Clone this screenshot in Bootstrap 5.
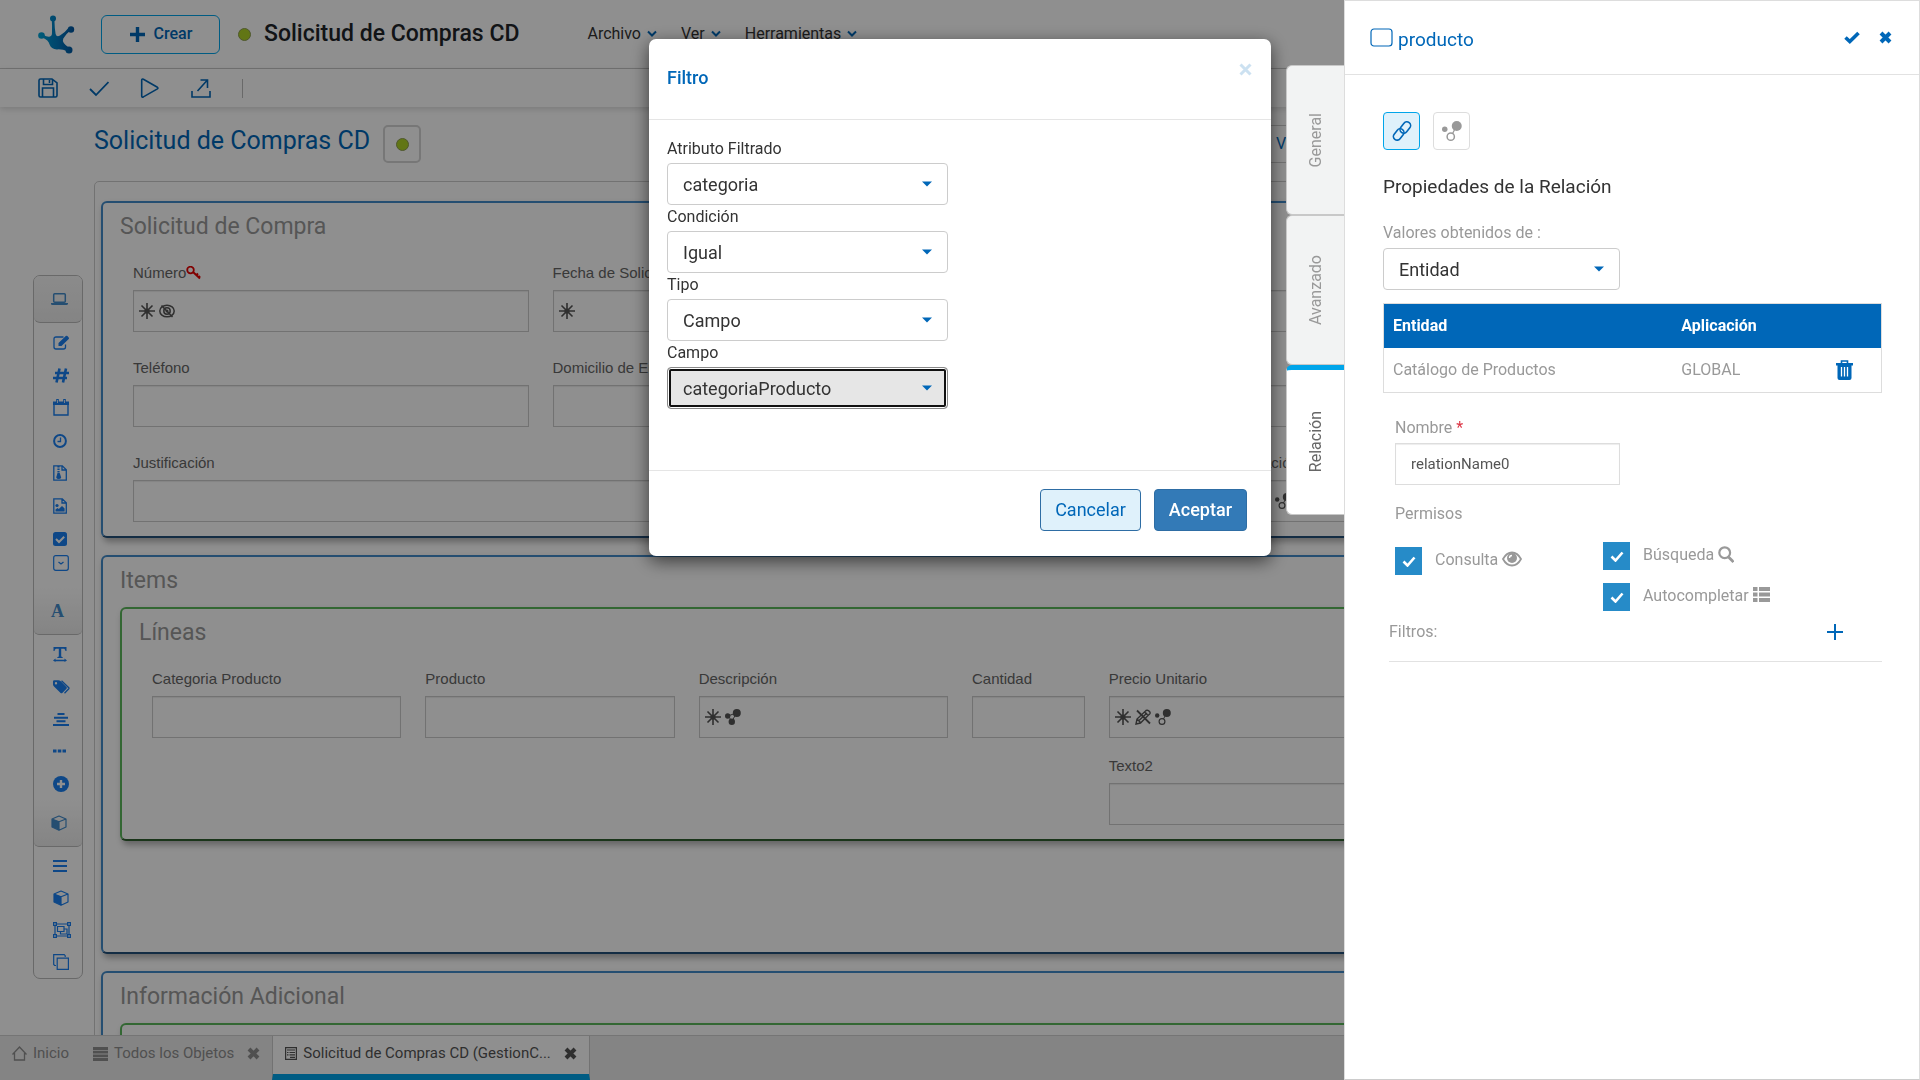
<!DOCTYPE html>
<html lang="es">
<head>
<meta charset="utf-8">
<meta name="viewport" content="width=device-width, initial-scale=1">
<title>Solicitud de Compras CD</title>
<link href="https://cdn.jsdelivr.net/npm/bootstrap@5.3.0/dist/css/bootstrap.min.css" rel="stylesheet">
<style>
  :root { --brand: #0067b8; --sky: #00a5ea; --pal: #197ff0; --steel: #428bca; }
  body { font-family: Roboto, sans-serif; font-size: 16px; color: #333; background: #fff; }
  a { text-decoration: none; }
  svg { display: block; flex: none; }
  .ic { fill: none; stroke: currentColor; stroke-width: 1.6; }
  .text-brand { color: var(--brand); }

  /* top bar */
  .topbar { height: 69px; border-bottom: 1px solid #ccc; padding: 0 38px; }
  .btn-create { width: 119px; height: 39px; margin: 0 18px 0 26px; gap: 8px; border: 1px solid var(--sky); border-radius: 6px; color: var(--brand); font-weight: 500; font-size: 16px; }
  .status-dot { width: 13px; height: 13px; border-radius: 50%; background: #afd327; border: 1px solid #8c9c50; }
  .app-title { font-size: 23px; font-weight: 500; line-height: 32px; color: #212529; margin: 0 68px 0 13px; }
  .topmenu a { color: #333; line-height: 24px; display: flex; align-items: center; gap: 6px; }
  .toolbar-strip { height: 38px; gap: 31px; padding-left: 38px; box-shadow: 0 2px 6px rgba(0,0,0,.15); color: var(--brand); }
  .toolbar-strip .divider { width: 1px; height: 19px; background: #bbb; }

  /* workspace */
  .palette { width: 50px; margin: 168px 11px 0 33px; border: 1px solid #bbb; border-radius: 7px; }
  .pal-head { height: 47px; border: 0; border-bottom: 1px solid #bbb; border-radius: 0 0 5px 5px; color: var(--steel); background: linear-gradient(#fff, #ececec); padding: 0 0 0 17px; display: flex; align-items: center; }
  .pal-head.first { background: linear-gradient(#f8f8f8, #ececec); border-radius: 6px; }
  .pal-list { display: flex; flex-direction: column; color: var(--pal); padding: 3px 0 0 19px; }
  .pal-list button { flex: 1 1 0; border: 0; background: none; padding: 0; color: inherit; display: flex; align-items: center; }
  .pal-list button.tight { flex: 0 0 14px; }
  .pal-a { height: 265px; padding-bottom: 17px; }
  .pal-b { height: 165px; }
  .pal-c { height: 131px; }
  .letter { font: bold 18px/18px "Liberation Serif", serif; }

  .work-main { margin-right: 94px; }
  .doc-head { margin-top: 18px; height: 56px; }
  .doc-title { font-size: 25px; line-height: 32px; color: var(--brand); font-weight: 400; }
  .dot-box { width: 38px; height: 38px; margin-left: 13px; border: 2px solid #d4d4d4; border-radius: 5px; background: none; }
  .view-box { width: 566px; height: 38px; border: 1px solid #ccc; border-radius: 4px; padding: 0 15px; }
  .frame { border: 1px solid #ccc; border-radius: 5px; padding: 19px 6px 0; }
  .zone { border: 2px solid var(--steel); border-bottom-color: #24507a; border-radius: 6px; padding: 6px 17px 14px; margin-bottom: 17px; box-shadow: 2px 4px 6px rgba(0,0,0,.3); background: #fff; }
  .zone.grid-zone { border-color: #5cb85c; border-bottom-color: #2f5f2f; margin-bottom: 0; }
  .zone.tall { padding-bottom: 111px; }
  .zone h2 { font-size: 23px; font-weight: 400; line-height: 36px; color: #999; margin: 0 0 8px; }
  .fields { padding: 8px 13px 0; }
  .fld label { display: flex; align-items: center; font-family: "Liberation Sans", sans-serif; font-size: 15px; line-height: 24px; color: #666; margin-bottom: 5px; }
  .inp { position: relative; height: 42px; }
  .inp .form-control { height: 42px; border: 1px solid #ccc; border-radius: 0; box-shadow: inset 0 1px 1px rgba(0,0,0,.075); background: none; }
  .inp .marks { position: absolute; left: 6px; top: 13px; display: flex; gap: 4px; color: #555; }
  .gap-rows { row-gap: 24px; }
  .gap-rows-s { row-gap: 16px; }
  .wide-a { flex: 48 1 0; } .wide-b { flex: 25 1 0; }

  /* bottom tabs */
  .task-tabs { height: 45px; background: #ebebeb; border-top: 1px solid #d0d0d0; font-size: 15px; }
  .task { display: flex; align-items: center; gap: 6px; color: #8f8f8f; border-bottom: 6px solid transparent; padding: 0 12px 3px; }
  .task.on { background: #fff; color: #555; border-bottom-color: var(--sky); border-left: 1px solid #ccc; border-right: 1px solid #ccc; }
  .task button { border: 0; background: none; padding: 0; margin-left: 7px; color: inherit; }

  /* dialog */
  .modal-backdrop.dim { background: #000; opacity: .44; width: 100%; height: 100%; }
  .modal-dialog.filter { max-width: 622px; margin: 39px auto; }
  .filter .modal-content { border: 0; border-radius: 7px; box-shadow: 0 5px 18px rgba(0,0,0,.6); }
  .filter .modal-header { height: 81px; border-color: #e5e5e5; padding: 0 19px 4px 18px; }
  .filter .modal-title { font-size: 18px; font-weight: 500; color: var(--brand); }
  .filter .close-x { border: 0; background: none; padding: 0; color: #cce1f1; }
  .filter .modal-body { padding: 17px 18px 61px; }
  .filter .modal-footer { border-color: #e5e5e5; height: 86px; padding: 0 24px 7px; gap: 13px; }
  .filter .modal-footer > * { margin: 0; }
  .filter .modal-footer .btn { height: 42px; font-size: 18px; line-height: 24px; padding: 0 14px; border-radius: 4px; }
  .btn-cancel { background: #dff1fb; border: 1px solid #2e6da4; color: var(--brand); }
  .btn-accept { background: #337ab7; border: 1px solid #2e6da4; color: #fff; font-weight: 500; }
  .combo { height: 42px; border: 1px solid #ccc; border-radius: 4px; font-size: 18px; color: #333; padding: 0 40px 0 15px; background: #fff url("data:image/svg+xml,%3Csvg xmlns='http://www.w3.org/2000/svg' viewBox='0 0 10 6'%3E%3Cpath d='M0 .5h10L5 5.500z' fill='%230067b8'/%3E%3C/svg%3E") no-repeat right 15px center / 10px 6px; }
  .combo.picked { background-color: #e6e6e6; border-color: #888; box-shadow: inset 0 0 0 1px #fff, inset 0 0 0 3px #111; }
  .combo-label { display: block; line-height: 24px; margin-bottom: 2px; }
  .filter .combo { width: 281px; }

  /* property panel */
  .side { position: fixed; top: 0; right: 0; bottom: 0; z-index: 1060; display: flex; }
  .side-tabs { padding-top: 65px; width: 58px; }
  .side-tab { width: 58px; height: 150px; border: 1px solid #c8c8c8; border-right: 0; border-radius: 6px 0 0 6px; background: #f2f3f3; color: #999; display: flex; align-items: center; justify-content: center; padding: 0; }
  .side-tab span { writing-mode: vertical-rl; transform: rotate(180deg); }
  .side-tab.on { background: #fff; color: #666; border-top: 5px solid var(--sky); }
  .side-card { width: 576px; background: #fff; border: 1px solid #ddd; border-bottom-color: #ccc; }
  .side-head { height: 74px; border-bottom: 1px solid #e2e2e2; padding: 0 27px 0 25px; }
  .side-head .obj { font-size: 19px; line-height: 24px; padding-top: 4px; }
  .side-body { padding: 37px 37px 0 38px; }
  .sq { width: 37px; height: 38px; border: 1px solid #ddd; border-radius: 4px; background: #fff; color: #999; padding: 0; display: flex; align-items: center; justify-content: center; }
  .sq.on { border-color: var(--sky); background: #dff1fb; color: var(--brand); }
  .side-body h3 { font-size: 19px; font-weight: 400; line-height: 30px; margin: 22px 0 18px; color: #333; }
  .muted { color: #999; line-height: 26px; }
  .lbl { display: block; margin-bottom: 2px; }
  .side-body .combo { width: 237px; }
  .ent { margin: 13px 0 0; border: 1px solid #ddd; }
  .ent th { background: var(--brand); color: #fff; font-weight: 700; height: 44px; }
  .ent td { color: #999; height: 45px; }
  .ent th, .ent td { padding: 0 9px; vertical-align: middle; box-shadow: none; border: 0; }
  .ent button, .adder { border: 0; background: none; padding: 0; color: var(--brand); }
  .ent button { margin-left: 10px; }
  .rel { padding: 22px 0 0 12px; }
  .name-in { width: 225px; height: 42px; border: 1px solid #ddd; border-radius: 0; font-size: 15px; color: #555; padding: 0 15px; box-shadow: inset 0 1px 1px rgba(0,0,0,.075); }
  .perm { display: flex; height: 28px; margin-bottom: 13px; }
  .perm:last-child { margin-bottom: 8px; }
  .perm label { display: flex; gap: 4px; line-height: 26px; color: #999; }
  .perm .form-check-input { width: 27px; height: 28px; margin: 0 13px 0 0; border: 0; border-radius: 0; flex: none; }
  .perm .form-check-input:checked { background: #268bc8 url("data:image/svg+xml,%3Csvg xmlns='http://www.w3.org/2000/svg' viewBox='0 0 14 11'%3E%3Cpath d='M1.500 5.500l4 4L12.500 1.500' fill='none' stroke='%23fff' stroke-width='2.600'/%3E%3C/svg%3E") no-repeat center / 14px 11px; }
  .perm-l { width: 208px; padding-top: 20px; } .perm-r { padding-top: 15px; }
  .filters { margin-left: 6px; border-bottom: 1px solid #e2e2e2; padding: 0 39px 16px 0; }
</style>
</head>
<body class="overflow-hidden">

<svg width="0" height="0" class="position-absolute" aria-hidden="true">
  <defs>
    <linearGradient id="lg" x1="0" y1="0" x2="37" y2="0" gradientUnits="userSpaceOnUse"><stop offset="0" stop-color="#00a5d8"/><stop offset=".55" stop-color="#0079c0"/><stop offset="1" stop-color="#00529c"/></linearGradient>
    <symbol id="star" viewBox="0 0 16 16"><g stroke="currentColor" stroke-width="1.600" fill="none"><path d="M8 0v16M0 8h16M2.500 2.500l11 11M13.500 2.500l-11 11"/></g><circle cx="8" cy="8" r="2.600" fill="currentColor"/></symbol>
    <symbol id="noeye" viewBox="0 0 16 16"><g fill="none" stroke="currentColor" stroke-width="1.500"><ellipse cx="8" cy="8" rx="7.200" ry="5.800"/><circle cx="8" cy="8" r="3.200"/><path d="M2.500 2.500l11 11.500"/></g><circle cx="8" cy="8" r="1.500" fill="currentColor"/></symbol>
    <symbol id="mol" viewBox="0 0 16 16"><circle cx="11.800" cy="4" r="4" fill="currentColor"/><circle cx="2.200" cy="6.500" r="2.200" fill="currentColor"/><circle cx="7" cy="12.500" r="2.900" fill="none" stroke="currentColor" stroke-width="1.200"/><path d="M8.500 10l1.500-3" stroke="currentColor"/></symbol>
    <symbol id="molf" viewBox="0 0 16 16"><circle cx="11.800" cy="4" r="4" fill="currentColor"/><circle cx="2.700" cy="7" r="2.700" fill="currentColor"/><circle cx="6.800" cy="12.700" r="3.200" fill="currentColor"/><path d="M3 7l8-3M7 12l4-7M3 7l4 5" stroke="currentColor"/></symbol>
    <symbol id="nopen" viewBox="0 0 16 16"><g fill="none" stroke="currentColor" stroke-width="1.400"><path d="M1 15l1-5L11 1.500q2-1 3.500 1t-.5 3L5.500 14zM9.500 3l3.500 3.500M2 10l3.500 3.500M4 11.500l8-7.500"/><path d="M2 1.500l13 13" stroke-width="1.800"/></g></symbol>
    <symbol id="cube" viewBox="0 0 16 16"><path d="M1 4l7 2.500V15L1 12z" fill="currentColor"/><path d="M1 4l7-3 7 3v8l-7 3.300L1 12zM1 4l7 2.700L15 4M8 6.700V15" fill="none" stroke="currentColor" stroke-width="1.200" stroke-linejoin="round"/></symbol>
    <symbol id="cross" viewBox="0 0 13 13"><path d="M2 2l9 9M11 2l-9 9" stroke="currentColor" stroke-width="4"/></symbol>
    <symbol id="chev" viewBox="0 0 10 8"><path d="M1 1.500l4 4 4-4" fill="none" stroke="currentColor" stroke-width="2"/></symbol>
  </defs>
</svg>

<div class="d-flex flex-column vh-100">
  <header class="topbar d-flex align-items-center flex-shrink-0">
    <svg width="37" height="39" viewBox="0 0 37 39" fill="url(#lg)"><circle cx="15" cy="3.500" r="3"/><circle cx="3.500" cy="20.500" r="3.300"/><circle cx="33" cy="14.500" r="3.200"/><circle cx="31" cy="35" r="3.500"/><path d="M13.800 5h2.600q.2 8 1.200 14 1 3.500 4.400 1.500 5-3 8.400-7.500l2.200 2.300q-5 4-7.300 8.300-2 4.200 5.700 9.200l-1.600 3.400q-5-2.200-10.400-1.800-6-.6-7.400-5-1-4-7.200-6.800l.8-2.700q3.500 2 6 1.800 3-.4 2.800-4.200.2-6-.2-12.500z"/></svg>
    <button class="btn btn-create d-flex align-items-center justify-content-center p-0" type="button"><svg width="17" height="17" viewBox="0 0 17 17"><path d="M8.500 1v15M1 8.500h15" stroke="currentColor" stroke-width="3.400"/></svg>Crear</button>
    <span class="status-dot"></span>
    <h1 class="app-title">Solicitud de Compras CD</h1>
    <nav class="topmenu d-flex gap-4">
      <a href="#">Archivo <svg width="10" height="8" class="text-brand"><use href="#chev"/></svg></a>
      <a href="#">Ver <svg width="10" height="8" class="text-brand"><use href="#chev"/></svg></a>
      <a href="#">Herramientas <svg width="10" height="8" class="text-brand"><use href="#chev"/></svg></a>
    </nav>
  </header>

  <div class="toolbar-strip d-flex align-items-center flex-shrink-0">
    <svg class="ic" width="20" height="20" viewBox="0 0 20 20"><path d="M2.500 1H14l5 4v12.500q0 1.500-1.500 1.500h-15Q1 19 1 17.500v-15Q1 1 2.500 1zM5.500 1v5.500h9V1M11.500 2v3M4.500 19v-9h11v9"/></svg>
    <svg class="ic" width="20" height="20" viewBox="0 0 20 20"><path d="M1 11l6 6L19.500 4" stroke-width="1.800"/></svg>
    <svg class="ic" width="20" height="20" viewBox="0 0 20 20"><path d="M1.700 2.300q0-1.800 1.700-1l14 8q1.200.8 0 1.600l-14 8q-1.700.7-1.700-1z"/></svg>
    <svg class="ic" width="20" height="20" viewBox="0 0 20 20"><path d="M1 13v6h18v-6M6.500 13L16 2.500M9.500 2H16.500v8"/></svg>
    <span class="divider"></span>
  </div>

  <div class="d-flex align-items-start flex-fill overflow-hidden">
    <aside class="palette flex-shrink-0">
      <button type="button" class="pal-head first w-100" aria-label="Formulario"><svg width="17" height="12" viewBox="0 0 17 12"><rect x="2.700" y=".8" width="11.600" height="8.400" rx="1" fill="none" stroke="currentColor" stroke-width="1.500"/><path d="M0 10h17v1q-.5 1-1.500 1h-14Q0 12 0 11z" fill="currentColor"/></svg></button>
      <div class="pal-list pal-a">
        <button type="button" aria-label="Texto"><svg width="17" height="15" viewBox="0 0 17 15"><path d="M10.500 2H3Q1 2 1 4v8q0 2 2 2h7.500q2 0 2-2v-2.500" fill="none" stroke="currentColor" stroke-width="1.300"/><path d="M5.500 11V8l7.300-7q.8-.6 1.600.1l1.300 1.300q.7.900 0 1.600L8.500 11zM6.500 8.500L8 10" fill="currentColor"/></svg></button>
        <button type="button" aria-label="Número"><svg class="ic" width="16" height="15" viewBox="0 0 16 15"><path d="M6.500.5l-3 14M13 .5l-3 14M2 5h14M0 10h14" stroke-width="2.600"/></svg></button>
        <button type="button" aria-label="Fecha"><svg width="16" height="17" viewBox="0 0 16 17"><path d="M1 4h14v12H1z" fill="none" stroke="currentColor" stroke-width="1.400"/><path d="M0 2.500h16V6H0z" fill="currentColor"/><path d="M4.500 0v4M11.500 0v4" stroke="currentColor" stroke-width="2.600"/><path d="M4.500 1v3M11.500 1v3" stroke="#fff" stroke-width=".8"/></svg></button>
        <button type="button" aria-label="Hora"><svg class="ic" width="14" height="14" viewBox="0 0 14 14"><circle cx="7" cy="7" r="5.900" stroke-width="2"/><path d="M7.500 3.500v4H4.500" stroke-width="1.300"/></svg></button>
        <button type="button" aria-label="Archivo"><svg class="ic" width="14" height="16" viewBox="0 0 14 16"><path d="M.8.800h8.500l4 4v10.400H.8zM9 1v4h4.200" stroke-width="1.300"/><path d="M5.500 1v7" stroke-dasharray="1.500 1" stroke-width="2.200"/><path d="M4.500 8h2.200l1.500 4.500q-.5 1.500-2.500 1.500T3.200 12.500z" fill="currentColor" stroke="none"/></svg></button>
        <button type="button" aria-label="Imagen"><svg class="ic" width="14" height="16" viewBox="0 0 14 16"><path d="M.8.800h8.500l4 4v10.400H.8zM9 1v4h4.200" stroke-width="1.300"/><circle cx="4" cy="7.500" r="1.600" fill="currentColor" stroke="none"/><path d="M2.500 13.500v-2L4.500 10l1.300 1L9 8l2.600 2.600v2.900z" fill="currentColor" stroke="none"/></svg></button>
        <button type="button" aria-label="Casilla"><svg width="14" height="14" viewBox="0 0 14 14"><rect width="14" height="14" rx="2.500" fill="currentColor"/><path d="M3 7l3 3 5.200-5.200" fill="none" stroke="#fff" stroke-width="2"/></svg></button>
        <button type="button" class="tight" aria-label="Lista"><svg class="ic" width="16" height="16" viewBox="0 0 16 16"><rect x=".7" y=".7" width="14.600" height="14.600" rx="2" stroke-width="1.200"/><path d="M5.500 7l2.500 2 2.500-2" stroke-width="1.300"/></svg></button>
      </div>
      <button type="button" class="pal-head w-100"><span class="letter">A</span></button>
      <div class="pal-list pal-b">
        <button type="button" aria-label="Título"><svg width="14" height="15" viewBox="0 0 14 15"><path d="M.5 0h13v4h-1q-.3-2-1.500-2.300H8.200v7.800l1.500.8v.7H4.300v-.7l1.500-.8V1.700H3Q1.800 2 1.500 4h-1zM0 13.500l2.500-2v1.300h9v-1.300l2.500 2-2.500 1.500v-.8h-9v.8z" fill="currentColor"/></svg></button>
        <button type="button" aria-label="Etiquetas"><svg width="17" height="14" viewBox="0 0 17 14"><path fill-rule="evenodd" d="M0 1.500Q0 .2 1.300.2H5.500q1 0 2 .8l6 6q.8.800 0 1.700L9.300 13q-.8.700-1.700 0L1 6.500Q0 5.500 0 4.500zM3 2a1.200 1.200 0 100 2.400A1.200 1.200 0 003 2z" fill="currentColor"/><path d="M8.500.7l7.300 7q.4.500 0 1l-4.300 4.500" fill="none" stroke="currentColor" stroke-width="1.300"/></svg></button>
        <button type="button" aria-label="Alinear"><svg class="ic" width="16" height="13" viewBox="0 0 16 13"><path d="M4.500 1h7M1 4.700h14M3.500 8.300h9M0 12h16" stroke-width="2"/></svg></button>
        <button type="button" aria-label="Más"><svg width="13" height="4" viewBox="0 0 13 4"><path d="M0 .5h3.500v3H0zM4.800.5h3.500v3H4.800zM9.500.5H13v3H9.500z" fill="currentColor"/></svg></button>
        <button type="button" aria-label="Agregar"><svg width="16" height="16" viewBox="0 0 16 16"><circle cx="8" cy="8" r="8" fill="currentColor"/><path d="M8 4v8M4 8h8" stroke="#fff" stroke-width="2.400"/></svg></button>
      </div>
      <button type="button" class="pal-head w-100" aria-label="Contenedores"><svg width="16" height="16"><use href="#cube"/></svg></button>
      <div class="pal-list pal-c">
        <button type="button" aria-label="Sección"><svg class="ic" width="14" height="12" viewBox="0 0 14 12"><path d="M0 1h14M0 6h14M0 11h14" stroke-width="2"/></svg></button>
        <button type="button" aria-label="Entidad"><svg width="16" height="16"><use href="#cube"/></svg></button>
        <button type="button" aria-label="Grupo"><svg class="ic" width="18" height="16" viewBox="0 0 18 16"><path d="M2 2h14v12H2zM4.500 4.500h6.500v5H4.500zM11 7h3v5H7.500V9.500" stroke-width="1.200"/><path d="M0 0h4v4H0zM14 0h4v4h-4zM0 12h4v4H0zM14 12h4v4h-4z" fill="currentColor" stroke="none"/><path d="M1.200 1.200h1.500v1.500H1.200zM15.300 1.200h1.500v1.500h-1.500zM1.200 13.300h1.500v1.500H1.200zM15.300 13.300h1.500v1.500h-1.500z" fill="#fff" stroke="none"/></svg></button>
        <button type="button" aria-label="Duplicar"><svg class="ic" width="16" height="16" viewBox="0 0 16 16"><path d="M4.200 4.200h11.200v11.200H4.200zM3 11.500H1.600L.7 10.500V.7h10.500l1 1V3" stroke-width="1.200"/></svg></button>
      </div>
    </aside>

    <main class="work-main flex-fill">
      <div class="doc-head d-flex align-items-start">
        <h2 class="doc-title mb-0">Solicitud de Compras CD</h2>
        <button type="button" class="dot-box d-flex align-items-center justify-content-center p-0" aria-label="Estado"><span class="status-dot"></span></button>
        <div class="view-box ms-auto d-flex align-items-center"><a href="#" class="text-brand">Vista</a></div>
      </div>
      <div class="frame">
        <section class="zone">
          <h2>Solicitud de Compra</h2>
          <div class="fields">
            <div class="row gap-rows">
              <div class="col-3 fld"><label for="f1">Número<svg class="ic" width="15" height="14" viewBox="0 0 15 14" style="color:#e60000"><circle cx="4.500" cy="4" r="3.300" stroke-width="1.800"/><path d="M7 6l7 6.500M10 9.500L12 7.500M12 12l2-2" stroke-width="2"/></svg></label>
                <div class="inp"><input id="f1" class="form-control"><span class="marks"><svg width="16" height="16"><use href="#star"/></svg><svg width="16" height="16"><use href="#noeye"/></svg></span></div></div>
              <div class="col-3 fld"><label for="f2">Fecha de Solicitud</label>
                <div class="inp"><input id="f2" class="form-control"><span class="marks"><svg width="16" height="16"><use href="#star"/></svg></span></div></div>
              <div class="col-6 fld"><label for="f3">Solicitante</label><div class="inp"><input id="f3" class="form-control"></div></div>
              <div class="col-3 fld"><label for="f4">Teléfono</label><div class="inp"><input id="f4" class="form-control"></div></div>
              <div class="col-3 fld"><label for="f5">Domicilio de Entrega</label><div class="inp"><input id="f5" class="form-control"></div></div>
              <div class="col-6 fld"><label for="f6">Proveedor</label><div class="inp"><input id="f6" class="form-control"></div></div>
              <div class="col-12 d-flex gap-4">
                <div class="wide-a fld"><label for="f7">Justificación</label><div class="inp"><input id="f7" class="form-control"></div></div>
                <div class="wide-b fld"><label for="f8">Cotización</label><div class="inp"><input id="f8" class="form-control"><span class="marks"><svg width="16" height="16"><use href="#star"/></svg><svg width="16" height="16"><use href="#nopen"/></svg><svg width="16" height="16"><use href="#mol"/></svg></span></div></div>
              </div>
            </div>
          </div>
        </section>

        <section class="zone tall">
          <h2>Items</h2>
          <div class="zone grid-zone">
            <h2>Líneas</h2>
            <div class="fields">
              <div class="row gap-rows-s">
                <div class="col-2 fld"><label for="g1">Categoria Producto</label><div class="inp"><input id="g1" class="form-control"></div></div>
                <div class="col-2 fld"><label for="g2">Producto</label><div class="inp"><input id="g2" class="form-control"></div></div>
                <div class="col-2 fld"><label for="g3">Descripción</label><div class="inp"><input id="g3" class="form-control"><span class="marks"><svg width="16" height="16"><use href="#star"/></svg><svg width="16" height="16"><use href="#molf"/></svg></span></div></div>
                <div class="col-1 fld"><label for="g4">Cantidad</label><div class="inp"><input id="g4" class="form-control"></div></div>
                <div class="col-5 fld"><label for="g5">Precio Unitario</label><div class="inp"><input id="g5" class="form-control"><span class="marks"><svg width="16" height="16"><use href="#star"/></svg><svg width="16" height="16"><use href="#nopen"/></svg><svg width="16" height="16"><use href="#mol"/></svg></span></div></div>
                <div class="col-5 offset-7 fld"><label for="g6">Texto2</label><div class="inp"><input id="g6" class="form-control"></div></div>
              </div>
            </div>
          </div>
        </section>

        <section class="zone">
          <h2>Información Adicional</h2>
          <div class="zone grid-zone pb-5"></div>
        </section>
      </div>
    </main>
  </div>

  <nav class="task-tabs d-flex flex-shrink-0">
    <a href="#" class="task"><svg class="ic" width="15" height="15" viewBox="0 0 15 15"><path d="M2.500 7v7h10V7M.5 8.500L7.500 1l7 7.500" stroke-width="1.300"/></svg>Inicio</a>
    <div class="task"><svg class="ic" width="15" height="14" viewBox="0 0 15 14"><path d="M0 1.500h15M0 5.200h15M0 8.900h15M0 12.500h15" stroke-width="2.800"/></svg>Todos los Objetos<button type="button" aria-label="Cerrar"><svg width="13" height="13"><use href="#cross"/></svg></button></div>
    <div class="task on"><svg class="ic" width="12" height="13" viewBox="0 0 12 13"><path d="M.6.600h10.800v11.800H.6zM2 3h8M2 5.500h1.500M4.500 5.500H10M2 7.800h1.500M4.500 7.800H10M5 10.300h5" stroke-width="1.200"/></svg>Solicitud de Compras CD (GestionC...<button type="button" aria-label="Cerrar"><svg width="13" height="13"><use href="#cross"/></svg></button></div>
  </nav>
</div>

<div class="modal-backdrop dim"></div>

<div class="modal d-block overflow-hidden" role="dialog" aria-labelledby="mt">
  <div class="modal-dialog filter">
    <div class="modal-content">
      <div class="modal-header">
        <h5 class="modal-title" id="mt">Filtro</h5>
        <button type="button" class="close-x ms-auto mb-3" aria-label="Cerrar"><svg width="13" height="13" viewBox="0 0 13 13"><path d="M1.500 1.500l10 10M11.500 1.500l-10 10" stroke="currentColor" stroke-width="3"/></svg></button>
      </div>
      <div class="modal-body">
        <label class="combo-label" for="s1">Atributo Filtrado</label>
        <select id="s1" class="form-select combo"><option>categoria</option></select>
        <label class="combo-label" for="s2">Condición</label>
        <select id="s2" class="form-select combo"><option>Igual</option></select>
        <label class="combo-label" for="s3">Tipo</label>
        <select id="s3" class="form-select combo"><option>Campo</option></select>
        <label class="combo-label" for="s4">Campo</label>
        <select id="s4" class="form-select combo picked"><option>categoriaProducto</option></select>
      </div>
      <div class="modal-footer">
        <button type="button" class="btn btn-cancel">Cancelar</button>
        <button type="button" class="btn btn-accept">Aceptar</button>
      </div>
    </div>
  </div>
</div>

<aside class="side">
  <div class="side-tabs">
    <button type="button" class="side-tab"><span>General</span></button>
    <button type="button" class="side-tab"><span>Avanzado</span></button>
    <button type="button" class="side-tab on"><span>Relación</span></button>
  </div>
  <div class="side-card">
    <div class="side-head d-flex align-items-center text-brand">
      <svg class="ic me-1" width="24" height="20" viewBox="0 0 24 20"><rect x="1" y="1" width="21" height="17" rx="3" stroke-width="1.200"/></svg>
      <span class="obj">producto</span>
      <div class="ms-auto d-flex align-items-center" style="gap:19px">
        <button type="button" class="adder" aria-label="Aplicar"><svg width="16" height="13" viewBox="0 0 16 13"><path d="M1.500 6.500l4.300 4L14.500 2" fill="none" stroke="currentColor" stroke-width="3.600"/></svg></button>
        <button type="button" class="adder" aria-label="Cerrar"><svg width="13" height="13"><use href="#cross"/></svg></button>
      </div>
    </div>
    <div class="side-body">
      <div class="d-flex" style="gap:13px">
        <button type="button" class="sq on" aria-label="Relación"><svg class="ic" width="20" height="20" viewBox="0 0 20 20"><g transform="rotate(-52 10 10)"><rect x="-1" y="5.800" width="12.500" height="7.400" rx="3.700"/><rect x="8.500" y="6.800" width="12.500" height="7.400" rx="3.700"/></g></svg></button>
        <button type="button" class="sq" aria-label="Regla"><svg width="20" height="20"><use href="#mol"/></svg></button>
      </div>
      <h3>Propiedades de la Relación</h3>
      <label class="muted lbl" for="ve">Valores obtenidos de :</label>
      <select id="ve" class="form-select combo"><option>Entidad</option></select>
      <table class="table ent">
        <thead><tr><th style="width:58%">Entidad</th><th style="width:29%">Aplicación</th><th></th></tr></thead>
        <tbody><tr><td>Catálogo de Productos</td><td>GLOBAL</td><td><button type="button" class="d-block" aria-label="Eliminar"><svg width="17" height="20" viewBox="0 0 17 20"><path d="M5.500 3V1h6v2" fill="none" stroke="currentColor" stroke-width="1.600"/><path d="M0 3h17v2.500h-1.500V18q0 2-2 2h-10q-2 0-2-2V5.500H0z" fill="currentColor"/><path d="M5.500 7v9.500M8.500 7v9.500M11.500 7v9.500" stroke="#fff" stroke-width="1.300"/></svg></button></td></tr></tbody>
      </table>
      <div class="rel">
        <label class="muted lbl" for="nm">Nombre <span class="text-danger">*</span></label>
        <input id="nm" class="form-control name-in" value="relationName0">
        <div class="muted mt-3">Permisos</div>
        <div class="d-flex">
          <div class="perm-l">
            <div class="perm"><input class="form-check-input" type="checkbox" id="p1" checked><label for="p1">Consulta <svg class="mt-1" width="20" height="16" viewBox="0 0 20 16"><path d="M1 8q3.500-6.500 9-6.500T19 8q-3.500 6.500-9 6.500T1 8z" fill="none" stroke="currentColor" stroke-width="1.800"/><circle cx="10" cy="7" r="5" fill="currentColor"/><path d="M7.500 7q0-2.500 2.500-2.500" fill="none" stroke="#fff" stroke-width="1.300"/></svg></label></div>
          </div>
          <div class="perm-r">
            <div class="perm"><input class="form-check-input" type="checkbox" id="p2" checked><label for="p2">Búsqueda <svg class="ic mt-1" width="16" height="17" viewBox="0 0 16 17"><circle cx="6.700" cy="6.700" r="5.400" stroke-width="2.200"/><path d="M10.500 11l5 5" stroke-width="2.800"/></svg></label></div>
            <div class="perm"><input class="form-check-input" type="checkbox" id="p3" checked><label for="p3">Autocompletar <svg class="mt-1" width="17" height="15" viewBox="0 0 17 15"><path d="M0 0h4.500v4H0zM6 0h11v4H6zM0 5.500h4.500v4H0zM6 5.500h11v4H6zM0 11h4.500v4H0zM6 11h11v4H6z" fill="currentColor"/></svg></label></div>
          </div>
        </div>
      </div>
      <div class="filters d-flex align-items-center"><span class="muted">Filtros:</span><button type="button" class="adder ms-auto" aria-label="Agregar filtro"><svg width="16" height="16" viewBox="0 0 16 16"><path d="M8 0v16M0 8h16" stroke="currentColor" stroke-width="2"/></svg></button></div>
    </div>
  </div>
</aside>

<script src="https://cdn.jsdelivr.net/npm/bootstrap@5.3.0/dist/js/bootstrap.bundle.min.js"></script>
</body>
</html>
